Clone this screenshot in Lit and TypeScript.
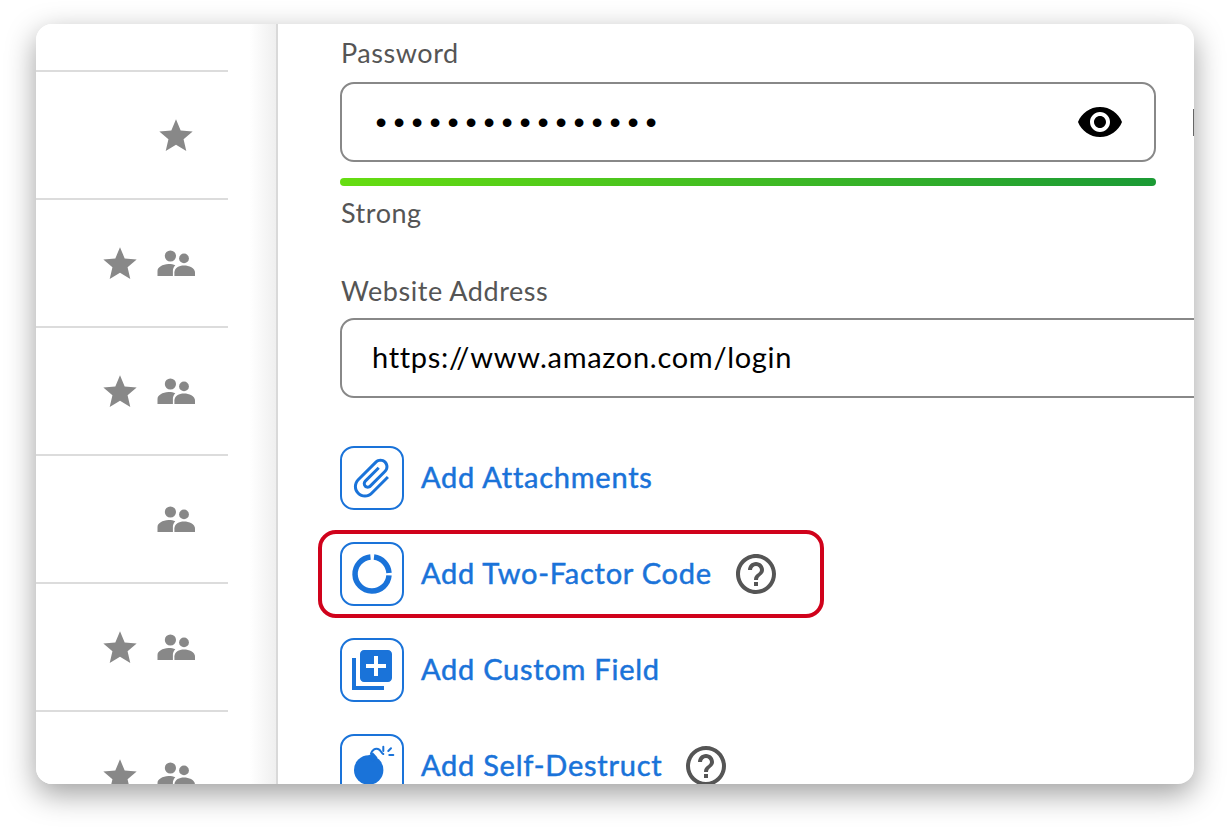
import { LitElement, html, css, svg } from "lit";
import { customElement } from "lit/decorators.js";

const star = html`<svg class="star" viewBox="0 0 24 24"><path d="M12 17.27L18.18 21l-1.64-7.03L22 9.24l-7.19-.61L12 2 9.19 8.63 2 9.24l5.46 4.73L5.82 21z"/></svg>`;
const people = html`<svg class="people" viewBox="0 0 38 28"><circle cx="13.4" cy="7" r="5.6"/><circle cx="27" cy="9.4" r="4.9"/><path d="M.5 27v-5c0-4 5-6.6 11-7 3 0 5 .4 6.8 1.2-1.6 1.6-2.4 3.6-2.4 5.6V27z"/><path d="M17.4 27v-3.4c0-4.6 4.6-7 9.6-7s11 2.4 11 7V27z"/></svg>`;
const help = html`<svg class="help" viewBox="0 0 24 24"><path d="M11 18h2v-2h-2v2zm1-16C6.48 2 2 6.48 2 12s4.48 10 10 10 10-4.48 10-10S17.52 2 12 2zm0 18c-4.41 0-8-3.59-8-8s3.59-8 8-8 8 3.59 8 8-3.59 8-8 8zm0-14c-2.21 0-4 1.79-4 4h2c0-1.1.9-2 2-2s2 .9 2 2c0 2-3 1.75-3 5h2c0-2.25 3-2.5 3-5 0-2.21-1.79-4-4-4z"/></svg>`;

const clip = svg`<g transform="translate(32 32) scale(2) translate(-12 -12) rotate(45 12 12)"><path d="M16.5 6v11.5c0 2.21-1.79 4-4 4s-4-1.79-4-4V5c0-1.38 1.12-2.5 2.5-2.5s2.5 1.12 2.5 2.5v10.5c0 .55-.45 1-1 1s-1-.45-1-1V6H10v9.5c0 1.38 1.12 2.5 2.5 2.5s2.5-1.12 2.5-2.5V5c0-2.21-1.79-4-4-4S7 2.79 7 5v12.5c0 3.04 2.46 5.5 5.5 5.5s5.5-2.46 5.5-5.5V6h-1.5z"/></g>`;
const ring = svg`<g fill="none" stroke="#1a73d9" stroke-width="5.5"><path d="M34 15.100A17 17 0 0 1 49 31"/><path d="M49 33.400A17 17 0 1 1 30.500 15.100"/></g>`;
const addBox = svg`<g transform="translate(8 8) scale(2)"><path d="M4 6H2v16h16v-2H4V6zm16-4H8c-1.1 0-2 .9-2 2v12c0 1.1.9 2 2 2h12c1.100 0 2-.9 2-2V4c0-1.100-.9-2-2-2zm-1 9h-4v4h-2v-4H9V9h4V5h2v4h4v2z"/></g>`;
const bomb = svg`<circle cx="28.700" cy="36" r="14.700"/><path d="M28 22l5-3.500 4.500 5-5 4z"/><g fill="none" stroke="#1a73d9" stroke-width="2" stroke-linecap="round"><path d="M31 19.500c1-3.500 4-5.500 7-4.500s3 4 5.300 5"/><path d="M43.300 12.700v4.300M48.300 17l2.700-2.700M49.300 21h4"/></g>`;

@customElement("app-root")
export class AppRoot extends LitElement {
  static styles = css`
    :host { display: block; height: 832px; background: #fff; padding: 24px 36px; box-sizing: border-box; }
    .window { display: flex; width: 1158px; height: 760px; background: #fff; border-radius: 16px; overflow: hidden; box-shadow: 0 10px 30px rgba(0,0,0,.38); }
    .side { flex: none; width: 242px; box-sizing: border-box; border-right: 2px solid #d9d9d9; background: linear-gradient(90deg, #fff 214px, #efefef 240px); }
    .list { width: 192px; }
    .item { display: flex; justify-content: flex-end; align-items: center; height: 128px; box-sizing: border-box; border-bottom: 2px solid #dcdcdc; padding-right: 33px; }
    .item:first-child { height: 48px; }
    .star { width: 40px; height: 40px; margin-right: 17px; fill: #888; position: relative; top: 1px; }
    .star:last-child { margin-right: -1px; }
    .people { width: 38px; height: 28px; fill: #888; }
    .main { flex: 1; min-width: 0; overflow: hidden; padding: 13px 0 0 62px; font-family: "Lato", sans-serif; }
    .label { font: 400 27px/32px "Lato", sans-serif; color: #555; letter-spacing: .55px; padding-left: 1px; }
    .pw-row { display: flex; align-items: center; margin-top: 13px; }
    .field { flex: none; box-sizing: border-box; height: 80px; border: 2px solid #888; border-radius: 14px; display: flex; align-items: center; justify-content: space-between; color: #000; }
    .pw { width: 816px; padding: 0 30px 0 33.400px; }
    .dots { font: 400 32px/1 "Liberation Sans", sans-serif; letter-spacing: 6.800px; }
    .eye { width: 48px; height: 48px; fill: #000; display: block; }
    .peek { flex: none; margin-left: 37px; width: 20px; height: 27px; border-left: 1px solid #666; }
    .meter { width: 816px; height: 8px; border-radius: 4px; margin-top: 16px; background: linear-gradient(90deg, #66dd11, #1b9a35); }
    .strong { margin-top: 11px; }
    .site-label { margin-top: 46px; }
    .url { width: 920px; margin-top: 11px; padding: 0 0 3px 30px; font: 400 29px/1 "Lato", sans-serif; letter-spacing: .7px; }
    .actions { display: flex; flex-direction: column; align-items: flex-start; gap: 32px; margin-top: 48px; }
    .action { display: flex; align-items: center; position: relative; height: 64px; }
    .box { flex: none; width: 64px; height: 64px; box-sizing: border-box; border: 2px solid #1a73d9; border-radius: 14px; }
    .box svg { display: block; width: 60px; height: 60px; fill: #1a73d9; }
    .text { margin-left: 17px; padding-bottom: 2px; font: 400 29px/36px "Lato", sans-serif; letter-spacing: .75px; -webkit-text-stroke: .5px #1a73d9; color: #1a73d9; white-space: nowrap; }
    .help { width: 48px; height: 48px; margin-left: 20px; fill: #555; flex: none; }
    .highlight { position: absolute; inset: -12px -44px -12px -22px; border: 4px solid #d0021b; border-radius: 18px; pointer-events: none; }
  `;

  private action(icon: unknown, label: string, hasHelp: boolean, mark = false) {
    return html`<div class="action">
      <div class="box"><svg viewBox="2 2 60 60">${icon}</svg></div>
      <span class="text">${label}</span>
      ${hasHelp ? help : ""}
      ${mark ? html`<div class="highlight"></div>` : ""}
    </div>`;
  }

  render() {
    const rows = [[0, 0], [1, 0], [1, 1], [1, 1], [0, 1], [1, 1], [1, 1]];
    return html`<div class="window">
      <aside class="side"><div class="list">
        ${rows.map(([s, p]) => html`<div class="item">${s ? star : ""}${p ? people : ""}</div>`)}
      </div></aside>
      <main class="main">
        <div class="label">Password</div>
        <div class="pw-row">
          <div class="field pw">
            <span class="dots">••••••••••••••••</span>
            <svg class="eye" viewBox="0 0 24 24"><path d="M12 4.500C7 4.500 2.730 7.610 1 12c1.730 4.390 6 7.500 11 7.500s9.270-3.110 11-7.500c-1.730-4.390-6-7.500-11-7.500zM12 17c-2.760 0-5-2.240-5-5s2.240-5 5-5 5 2.240 5 5-2.240 5-5 5zm0-8c-1.660 0-3 1.340-3 3s1.340 3 3 3 3-1.340 3-3-1.340-3-3-3z"/></svg>
          </div>
          <div class="peek"></div>
        </div>
        <div class="meter"></div>
        <div class="label strong">Strong</div>
        <div class="label site-label">Website Address</div>
        <div class="field url">https://www.amazon.com/login</div>
        <div class="actions">
          ${this.action(clip, "Add Attachments", false)}
          ${this.action(ring, "Add Two-Factor Code", true, true)}
          ${this.action(addBox, "Add Custom Field", false)}
          ${this.action(bomb, "Add Self-Destruct", true)}
        </div>
      </main>
    </div>`;
  }
}
